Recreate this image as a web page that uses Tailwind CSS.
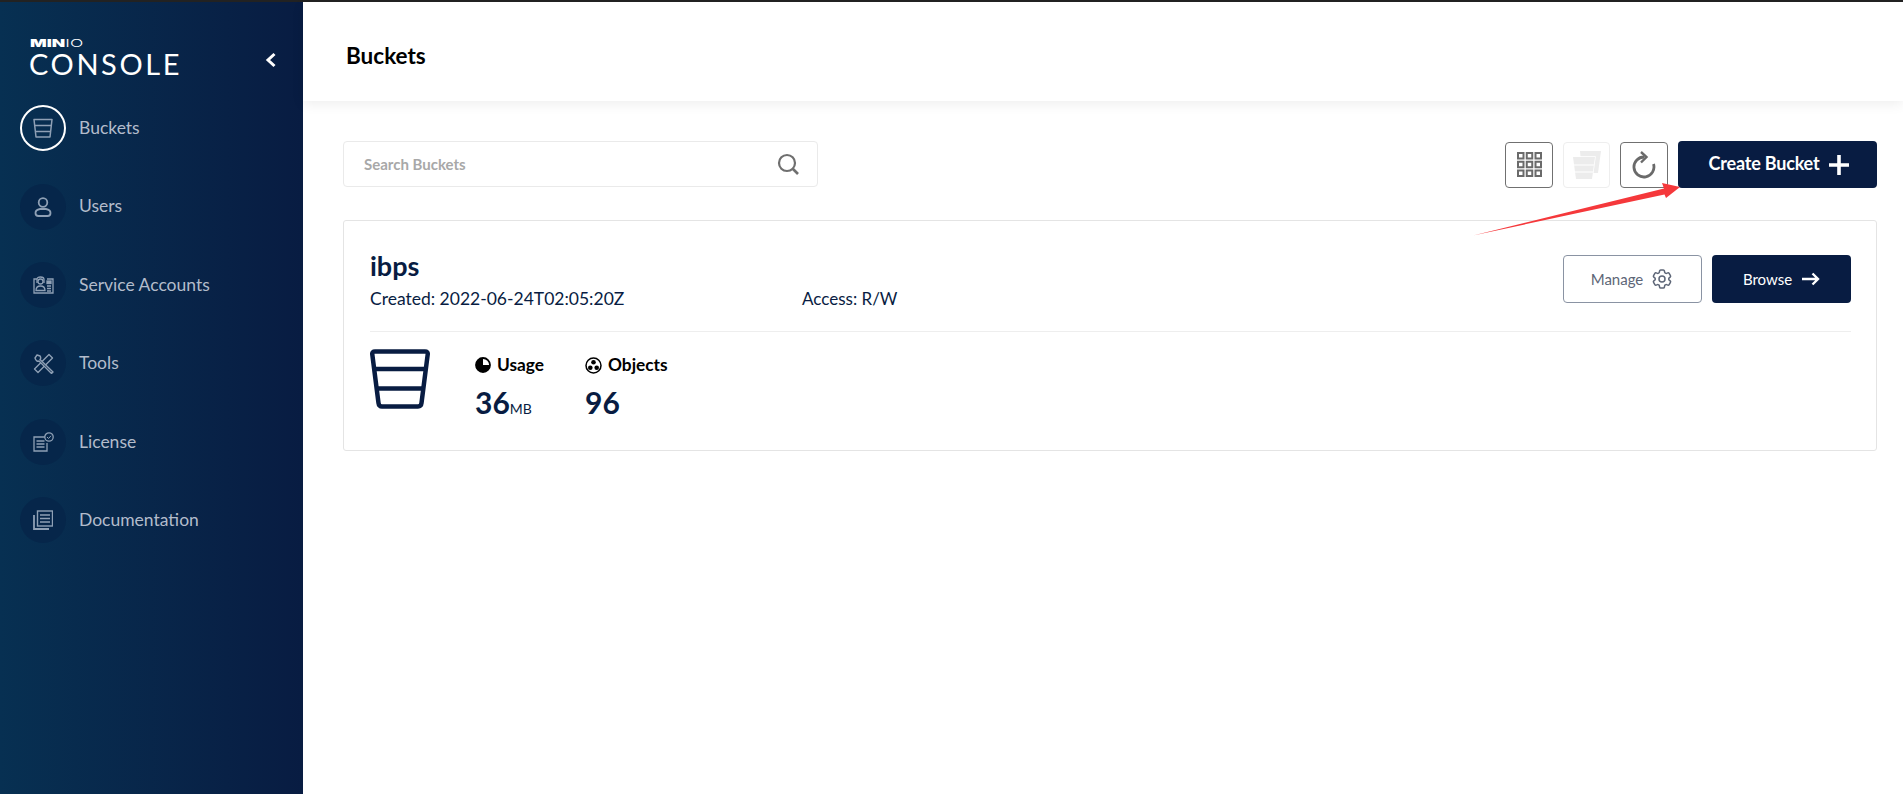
<!DOCTYPE html>
<html lang="en">
<head>
  <meta charset="utf-8">
  <title>MinIO Console</title>
  <script src="https://cdn.jsdelivr.net/npm/@tailwindcss/browser@4"></script>
</head>
<body class="h-[794px] overflow-hidden bg-white font-['Lato',sans-serif]">
  <div class="flex h-[794px] flex-col">
    <div class="h-[2px] w-full bg-[#222]"></div>
    <div class="flex min-h-0 flex-1">

      <aside class="h-full w-[303px] shrink-0 bg-gradient-to-r from-[#073052] to-[#081c42]">
        <div class="flex h-[87px] items-start justify-between pl-[29px] pr-[26px] pt-[36px]">
          <div class="text-white">
            <div class="ml-[1px] flex h-[9px] origin-left scale-x-[1.75] items-center text-[10px] leading-none font-['Inter',sans-serif]"><span class="font-black">MIN</span><span class="font-light">IO</span></div>
            <div class="mt-[3px] text-[29px] leading-[28px] font-normal tracking-[2.6px]">CONSOLE</div>
          </div>
          <svg class="mt-[14px]" width="12" height="16" viewBox="0 0 12 16" fill="none" stroke="#fff" stroke-width="3"><path d="M9.500 2 3 8l6.500 6"/></svg>
        </div>
        <nav class="flex flex-col pl-[20px]">
          <a class="flex h-[78.4px] items-center gap-[13px]">
            <span class="flex h-[46px] w-[46px] items-center justify-center rounded-full border-2 border-white">
              <svg width="20" height="20" viewBox="0 0 20 20" fill="none" stroke="#8fa0b5" stroke-width="1.500" stroke-linejoin="round"><path d="M1 1.500h18L17 19H3z"/><path d="M1.700 7.500h16.600M2.400 13.500h15.200"/></svg>
            </span>
            <span class="text-[17.5px] text-[#b3bccb]">Buckets</span>
          </a>
          <a class="flex h-[78.4px] items-center gap-[13px]">
            <span class="flex h-[46px] w-[46px] items-center justify-center rounded-full bg-[#06264a]">
              <svg width="18" height="20" viewBox="0 0 18 20" fill="none" stroke="#8fa0b5" stroke-width="1.800"><circle cx="9" cy="5.500" r="4.300"/><path d="M6 12c-3 .5-4.500 2-4.500 4 0 1.800 1 3 3 3h9c2 0 3-1.200 3-3 0-2-1.500-3.500-4.500-4z"/></svg>
            </span>
            <span class="text-[17.5px] text-[#b3bccb]">Users</span>
          </a>
          <a class="flex h-[78.4px] items-center gap-[13px]">
            <span class="flex h-[46px] w-[46px] items-center justify-center rounded-full bg-[#06264a]">
              <svg width="21" height="18" viewBox="0 0 21 18" fill="none" stroke="#8fa0b5" stroke-width="1.300"><path d="M4 3H1v14h19V3h-6"/><path d="M4 7V3.500C4 1.500 5.500 1 7.500 1S11 1.500 11 3.500V7"/><circle cx="7.500" cy="5.500" r="2.500"/><path d="M3 14.500c0-3 2-4.500 4.500-4.500s4.500 1.500 4.500 4.500z"/><rect x="14" y="5" width="4" height="2.500" fill="#8fa0b5"/><path d="M14 10h4M14 12.500h4M14 15h4"/></svg>
            </span>
            <span class="text-[17.5px] text-[#b3bccb]">Service Accounts</span>
          </a>
          <a class="flex h-[78.4px] items-center gap-[13px]">
            <span class="flex h-[46px] w-[46px] items-center justify-center rounded-full bg-[#06264a]">
              <svg width="21" height="21" viewBox="0 0 21 21" fill="none" stroke="#8fa0b5" stroke-width="1.400" stroke-linejoin="round"><path d="M16 1.500l3.500 3.500L5 19.500 1.500 16z"/><path d="M2 5l2-3 3 1c1 1.500.5 3 0 3.500l13 12.500-1.500 1.500L6 8c-1 .5-3 .5-4-3z" fill="#06264a"/></svg>
            </span>
            <span class="text-[17.5px] text-[#b3bccb]">Tools</span>
          </a>
          <a class="flex h-[78.4px] items-center gap-[13px]">
            <span class="flex h-[46px] w-[46px] items-center justify-center rounded-full bg-[#06264a]">
              <svg width="21" height="20" viewBox="0 0 21 20" fill="none" stroke="#8fa0b5" stroke-width="1.300"><path d="M12 5H1v14h13v-8"/><path d="M3.500 9h8M3.500 12h8M3.500 15h8" stroke-width="1.500"/><circle cx="16" cy="5" r="4.200" fill="#06264a"/><path d="m14 5 1.500 1.500L18 3.800" stroke-width="1"/></svg>
            </span>
            <span class="text-[17.5px] text-[#b3bccb]">License</span>
          </a>
          <a class="flex h-[78.4px] items-center gap-[13px]">
            <span class="flex h-[46px] w-[46px] items-center justify-center rounded-full bg-[#06264a]">
              <svg width="20" height="20" viewBox="0 0 20 20" fill="none" stroke="#8fa0b5" stroke-width="1.400"><rect x="4.500" y="1" width="15" height="15"/><path d="M7 5h10M7 8.500h10M7 12h10" stroke-width="1.600"/><path d="M1 5v14h15" stroke-width="1.800"/></svg>
            </span>
            <span class="text-[17.5px] text-[#b3bccb]">Documentation</span>
          </a>
        </nav>
      </aside>

      <main class="min-w-0 flex-1 bg-white">
        <header class="flex h-[99px] items-center pt-[8px] pl-[43px] shadow-[0_3px_12px_rgba(0,0,0,0.07)]">
          <h1 class="text-[22.5px] font-bold text-black">Buckets</h1>
        </header>

        <div class="pl-[40px] pr-[26px] pt-[40px]">
          <div class="flex items-start">
            <div class="flex h-[46px] w-[475px] items-center justify-between rounded-[4px] border border-[#eaeaea] bg-white pl-[20px] pr-[18px]">
              <span class="text-[15px] font-bold text-[#a8a8a8]">Search Buckets</span>
              <svg width="22" height="22" viewBox="0 0 22 22" fill="none" stroke="#6f6f6f" stroke-width="2.200"><circle cx="10" cy="10" r="8"/><path d="m16 16 5 5" stroke-width="2.600"/></svg>
            </div>
            <div class="ml-auto flex items-center">
              <button class="flex h-[46px] w-[48px] items-center justify-center rounded-[4px] border border-[#707070]">
                <svg width="25" height="25" viewBox="0 0 25 25" fill="none" stroke="#6a6a6a" stroke-width="2"><rect x="1" y="1" width="5.500" height="5.500"/><rect x="9.750" y="1" width="5.500" height="5.500"/><rect x="18.500" y="1" width="5.500" height="5.500"/><rect x="1" y="9.750" width="5.500" height="5.500"/><rect x="9.750" y="9.750" width="5.500" height="5.500"/><rect x="18.500" y="9.750" width="5.500" height="5.500"/><rect x="1" y="18.500" width="5.500" height="5.500"/><rect x="9.750" y="18.500" width="5.500" height="5.500"/><rect x="18.500" y="18.500" width="5.500" height="5.500"/></svg>
              </button>
              <button class="ml-[10px] flex h-[46px] w-[47px] items-center justify-center rounded-[4px] border border-[#eeeeee]">
                <svg width="28" height="28" viewBox="0 0 28 28"><path d="M7 0h21l-3 22H9z" fill="#ececec"/><path d="M0 6h22l-3 22H3z" fill="#ececec" stroke="#fff" stroke-width="1.500" paint-order="stroke"/><path d="M1 14h20M2 21h18" stroke="#fff" stroke-width="1.200"/></svg>
              </button>
              <button class="ml-[10px] flex h-[46px] w-[48px] items-center justify-center rounded-[4px] border border-[#707070]">
                <svg width="24" height="28" viewBox="0 0 24 28" fill="none" stroke="#6a6a6a" stroke-width="2.800"><path d="M12.500 6A10 10 0 1 0 21.500 13"/><path d="M9 1l5.500 5L9 11.500" stroke-width="2.400"/></svg>
              </button>
              <button class="ml-[10px] flex h-[47px] w-[199px] items-center justify-center gap-[10px] rounded-[4px] bg-[#081c42] pl-[3px] text-white">
                <span class="pb-[2px] text-[18px] font-bold tracking-[-0.2px]">Create Bucket</span>
                <svg width="20" height="20" viewBox="0 0 20 20" fill="#fff"><path d="M8.200 0h3.600v8.200H20v3.600h-8.200V20H8.200v-8.200H0V8.200h8.200z"/></svg>
              </button>
            </div>
          </div>

          <section class="mt-[32px] h-[231px] rounded-[3px] border border-[#e4e4e4] bg-white pl-[26px] pr-[25px] pt-[30px]">
            <div class="flex h-[80px] items-start justify-between">
              <div>
                <h2 class="text-[27px] leading-[30px] font-bold text-[#081c42]">ibps</h2>
                <div class="mt-[8px] flex leading-[20px] text-[#081c42]">
                  <span class="w-[432px] text-[17.5px]">Created: 2022-06-24T02:05:20Z</span>
                  <span class="text-[17px]">Access: R/W</span>
                </div>
              </div>
              <div class="mt-[4px] flex gap-[10px]">
                <button class="flex h-[48px] w-[139px] items-center justify-center gap-[7px] rounded-[4px] border border-[#8a93a3] text-[15px] text-[#5d6677]">
                  Manage
                  <svg width="24" height="24" viewBox="0 0 24 24" fill="none" stroke="#5d6677" stroke-width="1.500"><path d="M9.594 3.940c.09-.542.56-.94 1.110-.94h2.593c.55 0 1.020.398 1.110.94l.213 1.281c.063.374.313.686.645.870.074.040.147.083.22.127.325.196.72.257 1.075.124l1.217-.456a1.125 1.125 0 0 1 1.370.490l1.296 2.247a1.125 1.125 0 0 1-.26 1.431l-1.003.827c-.293.241-.438.613-.43.992a7.723 7.723 0 0 1 0 .255c-.008.378.137.75.43.991l1.004.827c.424.35.534.955.26 1.430l-1.298 2.247a1.125 1.125 0 0 1-1.369.491l-1.217-.456c-.355-.133-.75-.072-1.076.124a6.470 6.470 0 0 1-.22.128c-.331.183-.581.495-.644.869l-.213 1.281c-.09.543-.56.94-1.110.94h-2.594c-.55 0-1.019-.398-1.110-.94l-.213-1.281c-.062-.374-.312-.686-.644-.87a6.520 6.520 0 0 1-.22-.127c-.325-.196-.72-.257-1.076-.124l-1.217.456a1.125 1.125 0 0 1-1.369-.49l-1.297-2.247a1.125 1.125 0 0 1 .26-1.431l1.004-.827c.292-.24.437-.613.43-.991a6.932 6.932 0 0 1 0-.255c.007-.38-.138-.751-.43-.992l-1.004-.827a1.125 1.125 0 0 1-.26-1.430l1.297-2.247a1.125 1.125 0 0 1 1.370-.491l1.216.456c.356.133.751.072 1.076-.124.072-.044.146-.086.22-.128.332-.183.582-.495.644-.869l.214-1.280Z"/><circle cx="12" cy="12" r="3"/></svg>
                </button>
                <button class="flex h-[48px] w-[139px] items-center justify-center gap-[10px] rounded-[4px] bg-[#081c42] text-[15px] text-white">
                  Browse
                  <svg width="18" height="14" viewBox="0 0 18 14" fill="none" stroke="#fff" stroke-width="2.400"><path d="M0 7h16M10.500 1.500 16 7l-5.500 5.500"/></svg>
                </button>
              </div>
            </div>
            <div class="h-px bg-[#eeeeee]"></div>
            <div class="mt-[17px] flex">
              <svg class="shrink-0" width="60" height="60" viewBox="0 0 60 60" fill="none" stroke="#081c42" stroke-width="4.500"><path d="M5 2.500h50c2 0 3 1 2.700 3L51.500 54c-.3 2.500-1.500 3.500-3.500 3.500H12c-2 0-3.200-1-3.500-3.500L2.300 5.500C2 3.500 3 2.500 5 2.500z"/><path d="M4.500 20h51M7 39.500h46"/></svg>
              <div class="ml-[45px] w-[110px] pt-[4px]">
                <div class="flex h-[24px] items-center gap-[6px] text-[17.3px] font-bold text-black">
                  <svg width="16" height="16" viewBox="0 0 16 16"><circle cx="8" cy="8" r="7" fill="none" stroke="#000" stroke-width="1.800"/><path d="M8 8V1a7 7 0 1 0 7 7z" fill="#000"/></svg>
                  Usage
                </div>
                <div class="mt-[8px] text-[#081c42]"><span class="text-[30px] leading-[34px] font-bold">36</span><span class="text-[14px] font-normal">MB</span></div>
              </div>
              <div class="pt-[4px]">
                <div class="flex h-[24px] items-center gap-[6px] text-[17.3px] font-bold text-black">
                  <svg width="17" height="17" viewBox="0 0 17 17"><circle cx="8.500" cy="8.500" r="7.500" fill="none" stroke="#000" stroke-width="1.500"/><circle cx="8.500" cy="5.300" r="2.300"/><circle cx="5.300" cy="10.800" r="2.300"/><circle cx="11.700" cy="10.800" r="2.300"/></svg>
                  Objects
                </div>
                <div class="mt-[8px] text-[30px] leading-[34px] font-bold text-[#081c42]">96</div>
              </div>
            </div>
          </section>
        </div>
      </main>
    </div>
  </div>

  <!-- annotation arrow drawn over the page -->
  <svg class="absolute left-[1470px] top-[180px]" width="215" height="60" viewBox="0 0 215 60"><path d="M3 55.500 194 8.500 192 3l18 4-14 11-1.500-3.500z" fill="#f5383b"/></svg>
</body>
</html>
